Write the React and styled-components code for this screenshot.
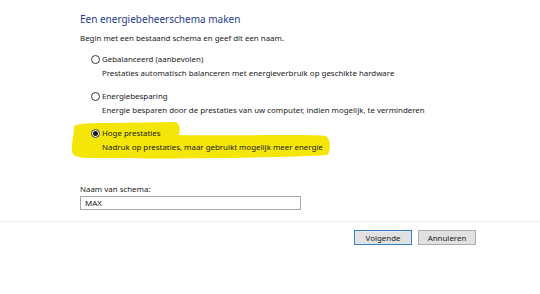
import React from 'react';
import styled, { createGlobalStyle } from 'styled-components';

const GlobalStyle = createGlobalStyle`
  html, body {
    margin: 0;
    padding: 0;
    background: #ffffff;
  }
  body {
    font-family: "Noto Sans", "Open Sans", sans-serif;
    color: #1a1a1a;
  }
`;

const Page = styled.div`
  width: 540px;
  height: 294px;
  display: flex;
  flex-direction: column;
  overflow: hidden;
`;

const Content = styled.div`
  display: flex;
  flex-direction: column;
  padding: 11px 0 0 80px;
`;

const Title = styled.h1`
  margin: 0;
  font-size: 10px;
  line-height: 16px;
  font-weight: 400;
  color: #1e3c8f;
`;

const Intro = styled.p`
  margin: 4px 0 7px;
  font-size: 7.9px;
  line-height: 14px;
`;

const Options = styled.div`
  display: flex;
  flex-direction: column;
  gap: 9px;
  padding-left: 11px;
`;

const Option = styled.label`
  position: relative;
  display: flex;
  flex-direction: column;
  font-size: 7.9px;
  line-height: 14px;
`;

const OptionHead = styled.span`
  position: relative;
  z-index: 1;
  display: flex;
  align-items: center;
  gap: 2px;
`;

const Radio = styled.span`
  width: 9px;
  height: 9px;
  box-sizing: border-box;
  border-radius: 50%;
  border: 1px solid #3a3a3a;
  background: #ffffff;
  display: flex;
  align-items: center;
  justify-content: center;

  &::after {
    content: '';
    width: 5px;
    height: 5px;
    border-radius: 50%;
    background: ${p => (p.$checked ? '#1a1a1a' : 'transparent')};
  }
`;

const Description = styled.span`
  position: relative;
  z-index: 1;
  padding-left: 11px;
  color: #222222;
`;

const Marker = styled.svg`
  position: absolute;
  left: -20px;
  top: -4px;
  width: 262px;
  height: 38px;
  z-index: 0;
`;

const NameField = styled.div`
  display: flex;
  flex-direction: column;
  margin-top: 28px;
  width: 221px;
`;

const FieldLabel = styled.span`
  font-size: 7.9px;
  line-height: 14px;
`;

const TextInput = styled.div`
  height: 14px;
  box-sizing: border-box;
  border: 1px solid #a9a9a9;
  padding: 0 4px;
  font-size: 7.9px;
  line-height: 12px;
`;

const Footer = styled.div`
  margin-top: 11px;
  border-top: 1px solid #f0f0f0;
  display: flex;
  justify-content: flex-end;
  gap: 6px;
  padding: 8px 64px 0 0;
`;

const Button = styled.div`
  width: 58px;
  height: 15px;
  box-sizing: border-box;
  display: flex;
  align-items: center;
  justify-content: center;
  font-size: 7.9px;
  background: #e1e1e1;
  border: 1px solid ${p => (p.$primary ? '#3b7fbf' : '#adadad')};
  box-shadow: ${p => (p.$primary ? 'inset 0 0 0 1px #d8e8f6' : 'none')};
`;

const options = [
  {
    label: 'Gebalanceerd (aanbevolen)',
    text: 'Prestaties automatisch balanceren met energieverbruik op geschikte hardware',
  },
  {
    label: 'Energiebesparing',
    text: 'Energie besparen door de prestaties van uw computer, indien mogelijk, te verminderen',
  },
  {
    label: 'Hoge prestaties',
    text: 'Nadruk op prestaties, maar gebruikt mogelijk meer energie',
    checked: true,
  },
];

const Highlight = () => (
  <Marker viewBox="0 0 262 38">
    <path
      d="M3 6 C2 2 10 1 40 1 L104 0 C108 1 110 5 108 13 C160 14 240 12 255 14 C260 17 260 30 256 33 C210 36 80 37 20 36 C8 36 2 34 1 30 C0 22 3 14 3 6 Z"
      fill="#f5e60a"
    />
  </Marker>
);

export default function App() {
  return (
    <Page>
      <GlobalStyle />
      <Content>
        <Title>Een energiebeheerschema maken</Title>
        <Intro>Begin met een bestaand schema en geef dit een naam.</Intro>
        <Options>
          {options.map(o => (
            <Option key={o.label}>
              {o.checked && <Highlight />}
              <OptionHead>
                <Radio $checked={o.checked} />
                {o.label}
              </OptionHead>
              <Description>{o.text}</Description>
            </Option>
          ))}
        </Options>
        <NameField>
          <FieldLabel>Naam van schema:</FieldLabel>
          <TextInput>MAX</TextInput>
        </NameField>
      </Content>
      <Footer>
        <Button $primary>Volgende</Button>
        <Button>Annuleren</Button>
      </Footer>
    </Page>
  );
}
